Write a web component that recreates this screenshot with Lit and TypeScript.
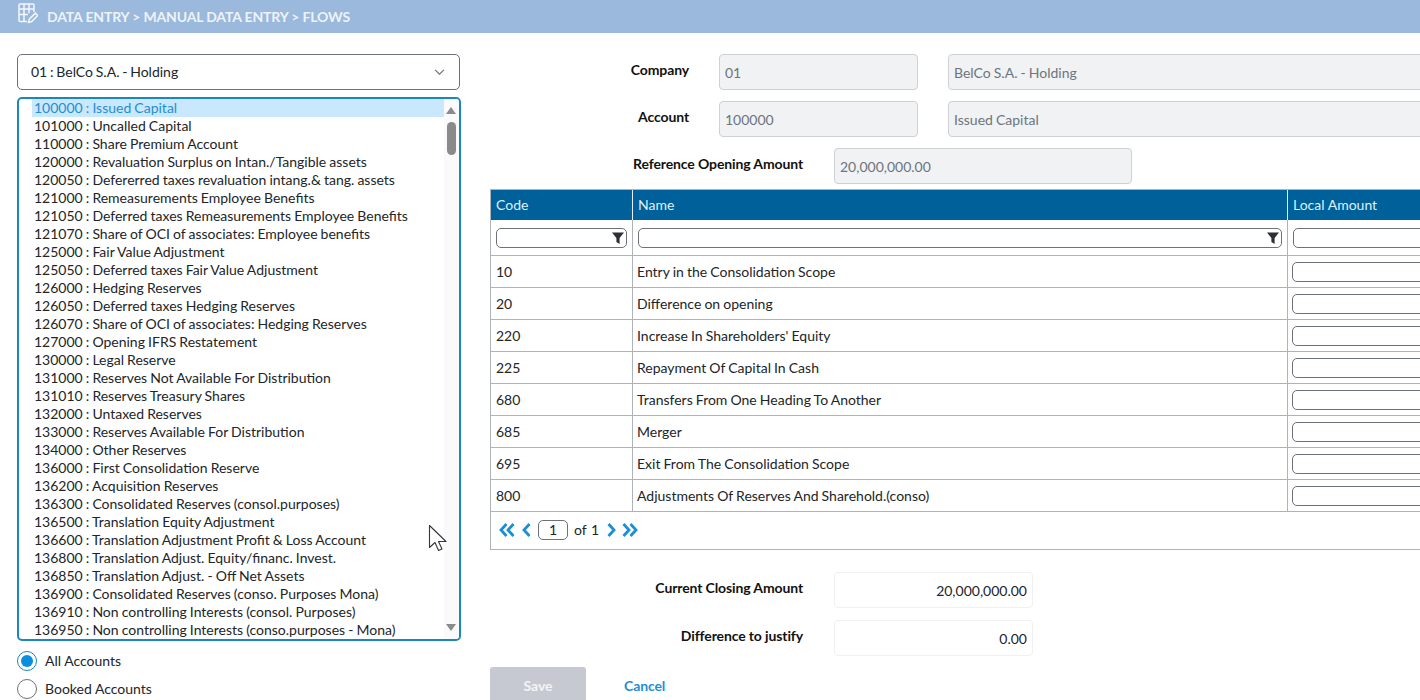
import { html, css, LitElement } from 'lit';
import { customElement } from 'lit/decorators.js';

const ACCOUNTS = [
  '100000 : Issued Capital',
  '101000 : Uncalled Capital',
  '110000 : Share Premium Account',
  '120000 : Revaluation Surplus on Intan./Tangible assets',
  '120050 : Defererred taxes revaluation intang.& tang. assets',
  '121000 : Remeasurements Employee Benefits',
  '121050 : Deferred taxes Remeasurements Employee Benefits',
  '121070 : Share of OCI of associates: Employee benefits',
  '125000 : Fair Value Adjustment',
  '125050 : Deferred taxes Fair Value Adjustment',
  '126000 : Hedging Reserves',
  '126050 : Deferred taxes Hedging Reserves',
  '126070 : Share of OCI of associates: Hedging Reserves',
  '127000 : Opening IFRS Restatement',
  '130000 : Legal Reserve',
  '131000 : Reserves Not Available For Distribution',
  '131010 : Reserves Treasury Shares',
  '132000 : Untaxed Reserves',
  '133000 : Reserves Available For Distribution',
  '134000 : Other Reserves',
  '136000 : First Consolidation Reserve',
  '136200 : Acquisition Reserves',
  '136300 : Consolidated Reserves (consol.purposes)',
  '136500 : Translation Equity Adjustment',
  '136600 : Translation Adjustment Profit & Loss Account',
  '136800 : Translation Adjust. Equity/financ. Invest.',
  '136850 : Translation Adjust. - Off Net Assets',
  '136900 : Consolidated Reserves (conso. Purposes Mona)',
  '136910 : Non controlling Interests (consol. Purposes)',
  '136950 : Non controlling Interests (conso.purposes - Mona)',
];

const FLOWS = [
  ['10', 'Entry in the Consolidation Scope'],
  ['20', 'Difference on opening'],
  ['220', "Increase In Shareholders' Equity"],
  ['225', 'Repayment Of Capital In Cash'],
  ['680', 'Transfers From One Heading To Another'],
  ['685', 'Merger'],
  ['695', 'Exit From The Consolidation Scope'],
  ['800', 'Adjustments Of Reserves And Sharehold.(conso)'],
];

const funnel = html`<svg class="funnel" viewBox="0 0 14 14" width="14" height="14"><path d="M1 1.5h12L8.6 7v6L5.4 11V7z" fill="#2b2f36"/></svg>`;

@customElement('app-root')
export class AppRoot extends LitElement {
  static styles = css`
    :host {
      display: block;
      width: 1420px;
      height: 700px;
      overflow: hidden;
      position: relative;
      background: #fff;
      color: #212529;
      font-family: Lato, 'Liberation Sans', sans-serif;
      font-size: 14px;
      line-height: 18px;
      word-spacing: -0.5px;
    }
    .crumb {
      height: 33px;
      background: #9ab9dc;
      display: flex;
      align-items: center;
      gap: 9px;
      padding-left: 18px;
      color: #eef3f9;
      font-weight: 700;
      letter-spacing: -0.15px;
      word-spacing: 0;
    }
    .crumb svg { align-self: flex-start; margin-top: 3px; }
    .page {
      display: flex;
      padding: 21px 0 0 17px;
      gap: 29px;
    }
    .left {
      width: 444px;
      flex: none;
    }
    .select {
      width: 443px;
      height: 36px;
      box-sizing: border-box;
      border: 1px solid #6c717a;
      border-radius: 5px;
      display: flex;
      align-items: center;
      justify-content: space-between;
      padding: 0 14px 0 13px;
      margin-bottom: 7px;
      word-spacing: -0.8px;
    }
    .list {
      height: 544px;
      box-sizing: border-box;
      border: 2px solid #1b87bb;
      border-radius: 5px;
      position: relative;
      overflow: hidden;
      padding-left: 13px;
    }
    .opt {
      height: 18px;
      line-height: 18px;
      padding-left: 2px;
      width: 410px;
      white-space: nowrap;
      position: relative;
    }
    .opt.sel {
      background: #c9e7fd;
      color: #1f8fd0;
    }
    .sb-track {
      position: absolute;
      right: 0;
      top: 0;
      bottom: 0;
      width: 15px;
      background: #fafafa;
    }
    .sb-up, .sb-down {
      position: absolute;
      right: 3px;
      width: 0;
      height: 0;
      border-left: 5px solid transparent;
      border-right: 5px solid transparent;
    }
    .sb-up { top: 8px; border-bottom: 7px solid #8a8a8a; }
    .sb-down { bottom: 8px; border-top: 7px solid #8a8a8a; }
    .sb-thumb {
      position: absolute;
      right: 3px;
      top: 23px;
      width: 9px;
      height: 33px;
      border-radius: 5px;
      background: #8a8a8a;
    }
    .radios {
      display: flex;
      flex-direction: column;
      gap: 8px;
      margin-top: 10px;
      word-spacing: 0;
    }
    .radio {
      display: flex;
      align-items: center;
      gap: 8px;
      height: 20px;
    }
    .dot {
      width: 20px;
      height: 20px;
      box-sizing: border-box;
      border-radius: 50%;
      border: 1px solid #6c717a;
      background: #fff;
      display: flex;
      align-items: center;
      justify-content: center;
    }
    .dot.on { border-color: #1b87bb; }
    .dot.on::after {
      content: '';
      width: 12px;
      height: 12px;
      border-radius: 50%;
      background: #0b8de0;
    }
    .right {
      width: 1100px;
      flex: none;
    }
    .frow {
      display: flex;
      align-items: flex-start;
      margin-bottom: 11px;
    }
    .lbl {
      font-weight: 700;
      text-align: right;
      letter-spacing: -0.12px;
      word-spacing: 0;
      color: #111;
      flex: none;
      line-height: 32px;
    }
    .lbl.a { width: 199px; margin-right: 30px; }
    .lbl.b { width: 313px; margin-right: 31px; }
    .field {
      height: 36px;
      box-sizing: border-box;
      border: 1px solid #ced0d4;
      border-radius: 4px;
      background: #f1f2f4;
      color: #6c757d;
      padding: 0 5px;
      line-height: 36px;
      flex: none;
    }
    .field.short { width: 199px; margin-right: 30px; }
    .field.long { width: 600px; }
    .field.mid { width: 298px; }
    .field.plain {
      width: 199px;
      background: #fff;
      border-color: #f0f0f0;
      color: #212529;
      text-align: right;
    }
    .frow.ref { margin-bottom: 5px; }
    .frow.close { margin-bottom: 12px; }
    .frow.close.last { margin-bottom: 11px; }
    .table {
      border: 1px solid #aeb2ba;
      border-right: none;
      margin-bottom: 22px;
    }
    .tr {
      display: grid;
      grid-template-columns: 142px 655px 1fr;
      border-bottom: 1px solid #aeb2ba;
      height: 32px;
      box-sizing: border-box;
    }
    .tr.filter { height: 36px; }
    .tr.head {
      height: 30px;
      background: #00609a;
      color: #dcf2f8;
      border-bottom: none;
      word-spacing: 0;
    }
    .tr > div {
      border-right: 1px solid #aeb2ba;
      padding-left: 5px;
      display: flex;
      align-items: center;
      min-width: 0;
    }
    .tr.head > div { border-right-color: #e8eef3; }
    .tr.rows > div:nth-child(2) { padding-left: 4px; }
    .tr.filter > div { padding-top: 1px; }
    .tr > div:last-child { border-right: none; }
    .box {
      width: 100%;
      height: 20px;
      box-sizing: border-box;
      border: 1px solid #6c717a;
      border-radius: 5px;
      display: flex;
      align-items: center;
      justify-content: flex-end;
    }
    .amount { width: 180px; margin-left: -1px; }
    .filter .amount { margin-left: 0; }
    .filter .name { margin-right: 5px; }
    .filter .code { margin-right: 5px; }
    .funnel { margin-right: 1px; }
    .pager {
      height: 37px;
      box-sizing: border-box;
      display: flex;
      align-items: center;
      padding: 0 0 2px 8px;
      word-spacing: 0;
    }
    .pager svg { flex: none; }
    .first { margin-right: 6px; }
    .prev { margin-right: 7px; }
    .next { margin: 0 5px 0 8px; }
    .pg {
      width: 30px;
      height: 20px;
      box-sizing: border-box;
      border: 1px solid #6c717a;
      border-radius: 5px;
      text-align: center;
      line-height: 18px;
    }
    .of { margin-left: 6px; word-spacing: 1px; }
    .actions {
      display: flex;
      align-items: center;
      gap: 38px;
    }
    .save {
      width: 96px;
      height: 38px;
      border-radius: 3px;
      background: #c6c9d2;
      color: #f3f4f7;
      font-weight: 700;
      display: flex;
      align-items: center;
      justify-content: center;
    }
    .cancel {
      color: #1f8fd0;
      font-weight: 700;
      letter-spacing: -0.12px;
    }
    .cursor {
      position: absolute;
      left: 428px;
      top: 524px;
    }
  `;

  render() {
    return html`
      <div class="crumb">
        <svg viewBox="0 0 20 21" width="20" height="21" fill="none" stroke="#f4f7fb" stroke-width="1.5">
          <path d="M9 18.5H2a1 1 0 0 1-1-1V2a1 1 0 0 1 1-1h13a1 1 0 0 1 1 1v7M1 6h15M1 11.5h9M6 1v17M11 1v9"/>
          <path d="M10.5 19.5l.8-3.4 6-6 2.4 2.4-6 6z"/>
        </svg>
        <span>DATA ENTRY &gt; MANUAL DATA ENTRY &gt; FLOWS</span>
      </div>
      <div class="page">
        <div class="left">
          <div class="select">
            <span>01 : BelCo S.A. - Holding</span>
            <svg viewBox="0 0 12 8" width="11" height="7" fill="none" stroke="#6c717a" stroke-width="1.3"><path d="M1 1l5 5 5-5"/></svg>
          </div>
          <div class="list">
            <div class="sb-track"></div>
            ${ACCOUNTS.map((a, i) => html`<div class="opt ${i === 0 ? 'sel' : ''}">${a}</div>`)}
            <div class="sb-up"></div>
            <div class="sb-thumb"></div>
            <div class="sb-down"></div>
          </div>
          <div class="radios">
            <div class="radio"><span class="dot on"></span>All Accounts</div>
            <div class="radio"><span class="dot"></span>Booked Accounts</div>
          </div>
        </div>
        <div class="right">
          <div class="frow">
            <div class="lbl a">Company</div>
            <div class="field short">01</div>
            <div class="field long">BelCo S.A. - Holding</div>
          </div>
          <div class="frow">
            <div class="lbl a">Account</div>
            <div class="field short">100000</div>
            <div class="field long">Issued Capital</div>
          </div>
          <div class="frow ref">
            <div class="lbl b">Reference Opening Amount</div>
            <div class="field mid">20,000,000.00</div>
          </div>
          <div class="table">
            <div class="tr head"><div>Code</div><div>Name</div><div>Local Amount</div></div>
            <div class="tr filter">
              <div><span class="box code">${funnel}</span></div>
              <div><span class="box name">${funnel}</span></div>
              <div><span class="box amount"></span></div>
            </div>
            ${FLOWS.map(([code, name]) => html`
              <div class="tr rows">
                <div>${code}</div>
                <div>${name}</div>
                <div><span class="box amount"></span></div>
              </div>`)}
            <div class="pager">
              <svg class="first" viewBox="0 0 16 14" width="16" height="14" fill="none" stroke="#1b8ed6" stroke-width="2.8"><path d="M7.5 1L2 7l5.5 6M14.5 1L9 7l5.5 6"/></svg>
              <svg class="prev" viewBox="0 0 10 14" width="10" height="14" fill="none" stroke="#1b8ed6" stroke-width="2.8"><path d="M8.5 1L3 7l5.5 6"/></svg>
              <span class="pg">1</span>
              <span class="of">of 1</span>
              <svg class="next" viewBox="0 0 10 14" width="10" height="14" fill="none" stroke="#1b8ed6" stroke-width="2.8"><path d="M1.5 1L7 7l-5.5 6"/></svg>
              <svg viewBox="0 0 16 14" width="16" height="14" fill="none" stroke="#1b8ed6" stroke-width="2.8"><path d="M1.5 1L7 7l-5.5 6M8.5 1L14 7l-5.5 6"/></svg>
            </div>
          </div>
          <div class="frow close">
            <div class="lbl b">Current Closing Amount</div>
            <div class="field plain">20,000,000.00</div>
          </div>
          <div class="frow close last">
            <div class="lbl b">Difference to justify</div>
            <div class="field plain">0.00</div>
          </div>
          <div class="actions">
            <div class="save">Save</div>
            <div class="cancel">Cancel</div>
          </div>
        </div>
      </div>
      <svg class="cursor" viewBox="0 0 20 30" width="20" height="30">
        <path d="M1.5 1.5v22l5.5-5 3.5 8 3.5-1.5-3.5-7.5h7.5z" fill="#fff" stroke="#33373d" stroke-width="1.1" stroke-linejoin="round"/>
      </svg>
    `;
  }
}
